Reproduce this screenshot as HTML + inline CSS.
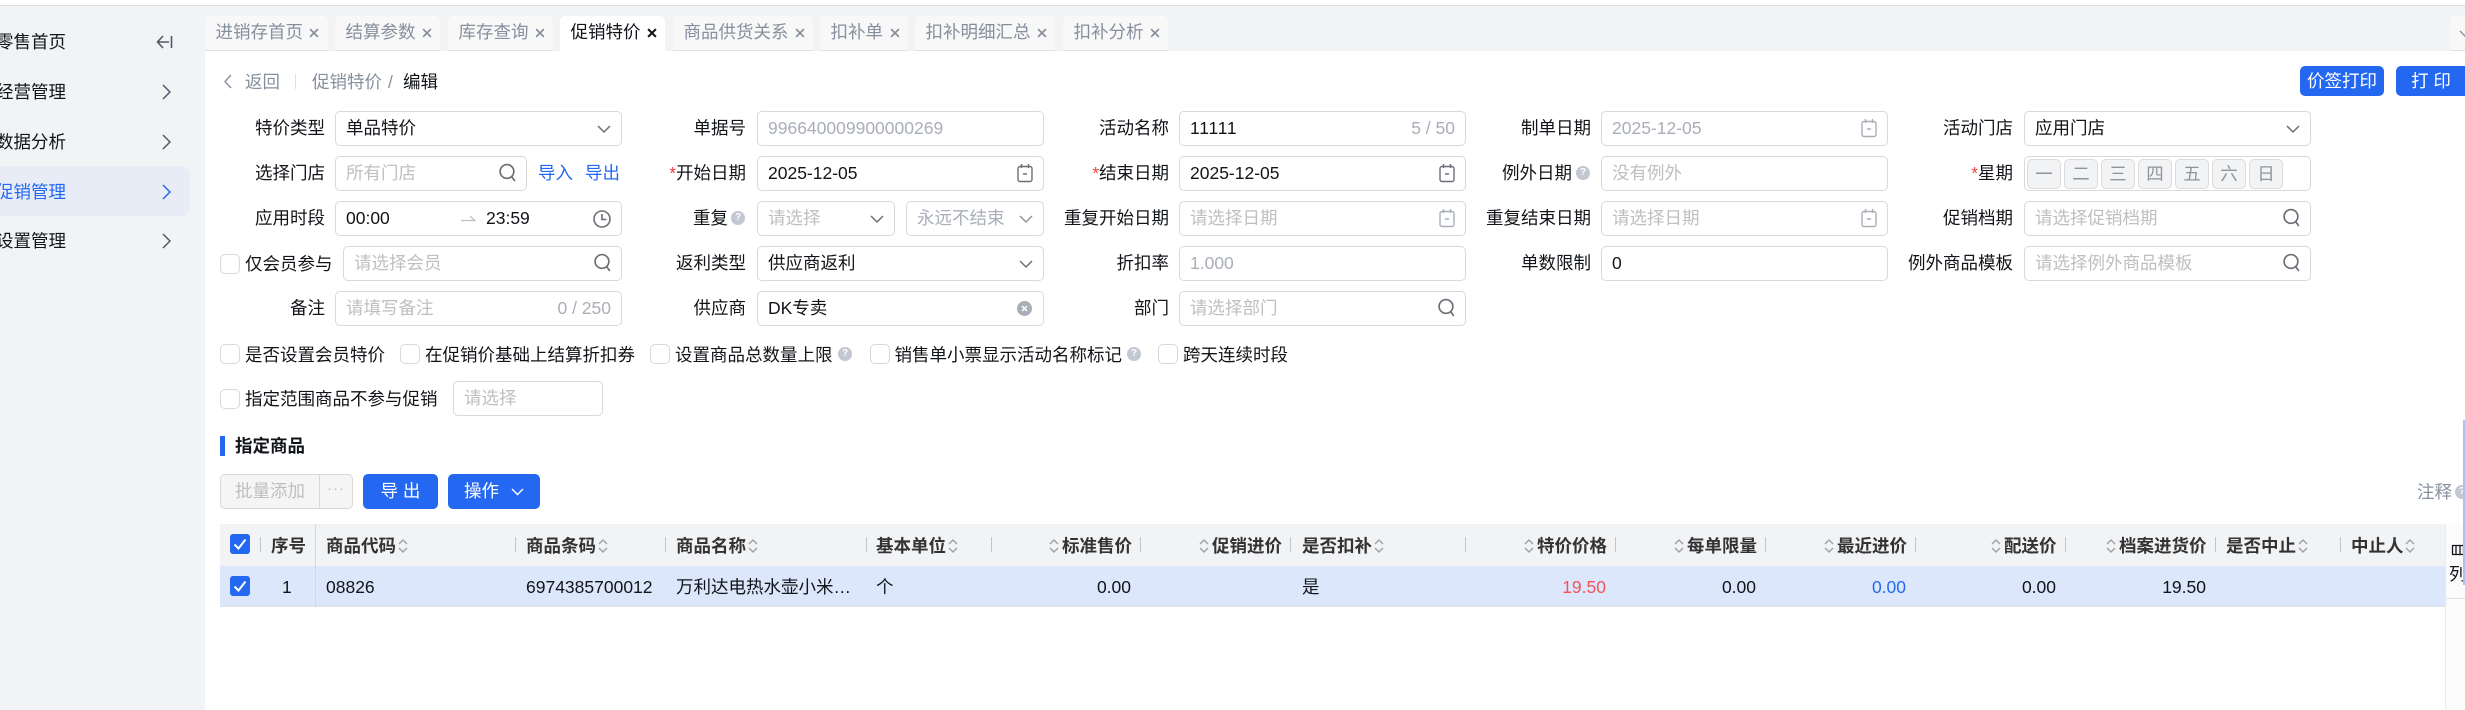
<!DOCTYPE html>
<html lang="zh-CN">
<head>
<meta charset="utf-8">
<title>促销特价</title>
<style>
html,body{margin:0;padding:0;width:2465px;height:710px;overflow:hidden;background:#fff}
body{position:relative;font-family:"Liberation Sans","Noto Sans CJK SC",sans-serif;font-size:17.5px;color:#111418}
div,span,svg{position:absolute;box-sizing:border-box;white-space:nowrap}
svg{fill:none;stroke:currentColor}
.tab{top:16px;height:35px;background:#f8f8f9;border-bottom:1px solid #dfe1e5;border-radius:5px 5px 0 0;color:#86909c;line-height:33px}
.tab span{left:10.5px;top:0}
.tab svg{top:12px;width:10px;height:10px;stroke-width:1.5}
.tab.on{background:#fff;border-bottom:0;color:#111418}
.nav{left:-4px;line-height:24px}
.chev{left:162px;width:9px;height:16px;color:#4e5969;stroke-width:1.5}
.i{height:35px;border:1px solid #d9d9d9;border-radius:5px;background:#fff;line-height:33px;padding-left:10px}
.ph{color:#bfbfbf}
.dis{color:#a9aeb8}
.l{width:220px;text-align:right;height:35px;line-height:35px}
.req{color:#f53f3f}
.ic{color:#6b6f76;stroke-width:1.6}
.cal{width:16px;height:20px;color:#6b6f76;stroke-width:1.4}
.cal.g{color:#a9aeb8}
.s{width:17px;height:19px;right:10px;top:6px;color:#6b6f76;stroke-width:1.6}
.dn{width:14px;height:9px;right:10px;top:13px;color:#6b6f76;stroke-width:1.5}
.cnt{right:10px;top:0;color:#a9aeb8}
.q{width:14px;height:14px;border-radius:50%;background:#c2c7d2;color:#fff;font-size:10px;line-height:14px;text-align:center;font-weight:700}
.cb{width:20px;height:20px;border:1px solid #d9d9d9;border-radius:5px;background:#fff}
.t{height:24px;line-height:24px}
.w{top:159px;width:34px;height:30px;border:1px solid #dcdcdc;border-radius:5px;background:#f2f3f5;color:#8f949c;text-align:center;line-height:28px}
.btn{background:#2468f2;color:#fff;border-radius:5px;text-align:center;line-height:33px}
.th{top:534px;line-height:24px;font-weight:700;color:#333}
.sp{top:537px;width:1px;height:15px;background:#c0c4cc}
.so{top:538px;width:10px;height:16px;color:#a0a3a8;stroke-width:1.5}
.td{top:575px;line-height:24px}
.r{text-align:right;width:100px}
.chk{left:230px;width:20px;height:20px;background:#2468f2;border-radius:3px;color:#fff;stroke-width:2}
</style>
</head>
<body>

<!-- top strip -->
<div style="left:0;top:0;width:2465px;height:5px;background:#fff"></div>
<div style="left:0;top:5px;width:2465px;height:1px;background:#dcdee2"></div>
<div style="left:0;top:6px;width:2465px;height:45px;background:#f2f3f5"></div>
<div style="left:0;top:6px;width:205px;height:704px;background:#f2f3f5"></div>

<!-- sidebar -->
<div style="left:0;top:166px;width:190px;height:50px;background:#e8ecf6;border-radius:0 9px 9px 0"></div>
<div class="nav" style="top:30px">零售首页</div>
<div class="nav" style="top:80px">经营管理</div>
<div class="nav" style="top:130px">数据分析</div>
<div class="nav" style="top:180px;color:#2468f2">促销管理</div>
<div class="nav" style="top:229px">设置管理</div>
<svg style="left:156px;top:34px;width:17px;height:16px;color:#4e5969;stroke-width:1.6" viewBox="0 0 17 16"><path d="M7 2 1.500 8 7 14M1.500 8H13M15.500 2v12"/></svg>
<svg class="chev" style="top:84px" viewBox="0 0 9 16"><path d="M1 1l7 7-7 7"/></svg>
<svg class="chev" style="top:134px" viewBox="0 0 9 16"><path d="M1 1l7 7-7 7"/></svg>
<svg class="chev" style="top:184px;color:#2468f2" viewBox="0 0 9 16"><path d="M1 1l7 7-7 7"/></svg>
<svg class="chev" style="top:233px" viewBox="0 0 9 16"><path d="M1 1l7 7-7 7"/></svg>

<!-- tabs -->
<div class="tab" style="left:205px;width:123px"><span>进销存首页</span><svg style="left:104px" viewBox="0 0 9 9"><path d="M1 1l7 7M8 1 1 8"/></svg></div>
<div class="tab" style="left:335px;width:105px"><span>结算参数</span><svg style="left:87px" viewBox="0 0 9 9"><path d="M1 1l7 7M8 1 1 8"/></svg></div>
<div class="tab" style="left:448px;width:105px"><span>库存查询</span><svg style="left:87px" viewBox="0 0 9 9"><path d="M1 1l7 7M8 1 1 8"/></svg></div>
<div class="tab on" style="left:560px;width:105px"><span>促销特价</span><svg style="left:87px;stroke-width:1.8" viewBox="0 0 9 9"><path d="M1 1l7 7M8 1 1 8"/></svg></div>
<div class="tab" style="left:673px;width:140px"><span>商品供货关系</span><svg style="left:122px" viewBox="0 0 9 9"><path d="M1 1l7 7M8 1 1 8"/></svg></div>
<div class="tab" style="left:820px;width:88px"><span>扣补单</span><svg style="left:70px" viewBox="0 0 9 9"><path d="M1 1l7 7M8 1 1 8"/></svg></div>
<div class="tab" style="left:915px;width:140px"><span>扣补明细汇总</span><svg style="left:122px" viewBox="0 0 9 9"><path d="M1 1l7 7M8 1 1 8"/></svg></div>
<div class="tab" style="left:1063px;width:105px"><span>扣补分析</span><svg style="left:87px" viewBox="0 0 9 9"><path d="M1 1l7 7M8 1 1 8"/></svg></div>
<div class="tab" style="left:2450px;width:15px;border-radius:5px 0 0 0"><svg style="left:9px;top:14px;width:12px;height:8px;stroke-width:1.4" viewBox="0 0 12 8"><path d="M1 1l5 5 5-5"/></svg></div>

<!-- breadcrumb -->
<svg style="left:224px;top:74px;width:8px;height:15px;color:#86909c;stroke-width:1.4" viewBox="0 0 8 15"><path d="M7 1 1 7.500 7 14"/></svg>
<div class="t" style="left:245px;top:70px;color:#86909c">返回</div>
<div style="left:295px;top:74px;width:1px;height:15px;background:#dfe1e5"></div>
<div class="t" style="left:312px;top:70px;color:#86909c">促销特价</div>
<div class="t" style="left:388px;top:70px;color:#86909c">/</div>
<div class="t" style="left:403px;top:70px">编辑</div>
<div class="btn" style="left:2300px;top:66px;width:84px;height:30px;line-height:30px">价签打印</div>
<div class="btn" style="left:2396px;top:66px;width:78px;height:30px;line-height:30px;border-radius:5px 0 0 5px;padding-right:8px">打 印</div>

<!-- row 1 -->
<div class="l" style="left:105px;top:111px">特价类型</div>
<div class="i" style="left:335px;top:111px;width:287px">单品特价<svg class="dn" viewBox="0 0 14 9"><path d="M1 1l6 6 6-6"/></svg></div>
<div class="l" style="left:526px;top:111px">单据号</div>
<div class="i dis" style="left:757px;top:111px;width:287px">996640009900000269</div>
<div class="l" style="left:949px;top:111px">活动名称</div>
<div class="i" style="left:1179px;top:111px;width:287px;letter-spacing:.8px">11111<span class="cnt" style="letter-spacing:0">5 / 50</span></div>
<div class="l" style="left:1371px;top:111px">制单日期</div>
<div class="i dis" style="left:1601px;top:111px;width:287px">2025-12-05<svg class="cal g" style="right:10px;top:6px" viewBox="0 0 16 20"><rect x="1" y="3.500" width="14" height="15" rx="2"/><path d="M4.500 1v4M11.500 1v4M6 11h4"/></svg></div>
<div class="l" style="left:1793px;top:111px">活动门店</div>
<div class="i" style="left:2024px;top:111px;width:287px">应用门店<svg class="dn" viewBox="0 0 14 9"><path d="M1 1l6 6 6-6"/></svg></div>

<!-- row 2 -->
<div class="l" style="left:105px;top:156px">选择门店</div>
<div class="i ph" style="left:335px;top:156px;width:192px">所有门店<svg class="s" viewBox="0 0 16 18"><circle cx="7.500" cy="8" r="6.500"/><path d="M12 13l3 4"/></svg></div>
<div class="t" style="left:538px;top:161px;color:#2468f2">导入</div>
<div class="t" style="left:585px;top:161px;color:#2468f2">导出</div>
<div class="l" style="left:526px;top:156px"><span class="req" style="position:static">*</span>开始日期</div>
<div class="i" style="left:757px;top:156px;width:287px">2025-12-05<svg class="cal" style="right:10px;top:6px" viewBox="0 0 16 20"><rect x="1" y="3.500" width="14" height="15" rx="2"/><path d="M4.500 1v4M11.500 1v4M6 11h4"/></svg></div>
<div class="l" style="left:949px;top:156px"><span class="req" style="position:static">*</span>结束日期</div>
<div class="i" style="left:1179px;top:156px;width:287px">2025-12-05<svg class="cal" style="right:10px;top:6px" viewBox="0 0 16 20"><rect x="1" y="3.500" width="14" height="15" rx="2"/><path d="M4.500 1v4M11.500 1v4M6 11h4"/></svg></div>
<div class="l" style="left:1352px;top:156px">例外日期</div>
<div class="q" style="left:1576px;top:166px">?</div>
<div class="i ph" style="left:1601px;top:156px;width:287px">没有例外</div>
<div class="l" style="left:1793px;top:156px"><span class="req" style="position:static">*</span>星期</div>
<div class="i" style="left:2024px;top:156px;width:287px"></div>
<div class="w" style="left:2027px">一</div>
<div class="w" style="left:2064px">二</div>
<div class="w" style="left:2101px">三</div>
<div class="w" style="left:2138px">四</div>
<div class="w" style="left:2175px">五</div>
<div class="w" style="left:2212px">六</div>
<div class="w" style="left:2249px">日</div>

<!-- row 3 -->
<div class="l" style="left:105px;top:201px">应用时段</div>
<div class="i" style="left:335px;top:201px;width:287px">00:00<span style="left:150px;top:0">23:59</span><svg style="left:124px;top:12px;width:16px;height:8px;color:#bfbfbf;stroke-width:1.2" viewBox="0 0 16 8"><path d="M1 6.500h14L10 2"/></svg><svg class="ic" style="right:10px;top:8px;width:18px;height:18px" viewBox="0 0 18 18"><circle cx="9" cy="9" r="8"/><path d="M9 4v5.500h4.500"/></svg></div>
<div class="l" style="left:508px;top:201px">重复</div>
<div class="q" style="left:731px;top:211px">?</div>
<div class="i ph" style="left:757px;top:201px;width:138px">请选择<svg class="dn" viewBox="0 0 14 9"><path d="M1 1l6 6 6-6"/></svg></div>
<div class="i dis" style="left:906px;top:201px;width:138px">永远不结束<svg class="dn" style="color:#8f949c" viewBox="0 0 14 9"><path d="M1 1l6 6 6-6"/></svg></div>
<div class="l" style="left:949px;top:201px">重复开始日期</div>
<div class="i ph" style="left:1179px;top:201px;width:287px">请选择日期<svg class="cal g" style="right:10px;top:6px" viewBox="0 0 16 20"><rect x="1" y="3.500" width="14" height="15" rx="2"/><path d="M4.500 1v4M11.500 1v4M6 11h4"/></svg></div>
<div class="l" style="left:1371px;top:201px">重复结束日期</div>
<div class="i ph" style="left:1601px;top:201px;width:287px">请选择日期<svg class="cal g" style="right:10px;top:6px" viewBox="0 0 16 20"><rect x="1" y="3.500" width="14" height="15" rx="2"/><path d="M4.500 1v4M11.500 1v4M6 11h4"/></svg></div>
<div class="l" style="left:1793px;top:201px">促销档期</div>
<div class="i ph" style="left:2024px;top:201px;width:287px">请选择促销档期<svg class="s" viewBox="0 0 16 18"><circle cx="7.500" cy="8" r="6.500"/><path d="M12 13l3 4"/></svg></div>

<!-- row 4 -->
<div class="cb" style="left:220px;top:254px"></div>
<div class="t" style="left:245px;top:252px">仅会员参与</div>
<div class="i ph" style="left:343px;top:246px;width:279px">请选择会员<svg class="s" viewBox="0 0 16 18"><circle cx="7.500" cy="8" r="6.500"/><path d="M12 13l3 4"/></svg></div>
<div class="l" style="left:526px;top:246px">返利类型</div>
<div class="i" style="left:757px;top:246px;width:287px">供应商返利<svg class="dn" viewBox="0 0 14 9"><path d="M1 1l6 6 6-6"/></svg></div>
<div class="l" style="left:949px;top:246px">折扣率</div>
<div class="i dis" style="left:1179px;top:246px;width:287px">1.000</div>
<div class="l" style="left:1371px;top:246px">单数限制</div>
<div class="i" style="left:1601px;top:246px;width:287px">0</div>
<div class="l" style="left:1793px;top:246px">例外商品模板</div>
<div class="i ph" style="left:2024px;top:246px;width:287px">请选择例外商品模板<svg class="s" viewBox="0 0 16 18"><circle cx="7.500" cy="8" r="6.500"/><path d="M12 13l3 4"/></svg></div>

<!-- row 5 -->
<div class="l" style="left:105px;top:291px">备注</div>
<div class="i ph" style="left:335px;top:291px;width:287px">请填写备注<span class="cnt">0 / 250</span></div>
<div class="l" style="left:526px;top:291px">供应商</div>
<div class="i" style="left:757px;top:291px;width:287px">DK专卖<svg style="right:11px;top:9px;width:15px;height:15px" viewBox="0 0 15 15"><circle cx="7.500" cy="7.500" r="7.500" fill="#a9aeb8" stroke="none"/><path d="M5 5l5 5M10 5l-5 5" stroke="#fff" stroke-width="1.500"/></svg></div>
<div class="l" style="left:949px;top:291px">部门</div>
<div class="i ph" style="left:1179px;top:291px;width:287px">请选择部门<svg class="s" viewBox="0 0 16 18"><circle cx="7.500" cy="8" r="6.500"/><path d="M12 13l3 4"/></svg></div>

<!-- checkbox row -->
<div class="cb" style="left:220px;top:344px"></div>
<div class="t" style="left:245px;top:343px">是否设置会员特价</div>
<div class="cb" style="left:400px;top:344px"></div>
<div class="t" style="left:425px;top:343px">在促销价基础上结算折扣券</div>
<div class="cb" style="left:650px;top:344px"></div>
<div class="t" style="left:675px;top:343px">设置商品总数量上限</div>
<div class="q" style="left:838px;top:347px">?</div>
<div class="cb" style="left:869.500px;top:344px"></div>
<div class="t" style="left:894.500px;top:343px">销售单小票显示活动名称标记</div>
<div class="q" style="left:1127px;top:347px">?</div>
<div class="cb" style="left:1158px;top:344px"></div>
<div class="t" style="left:1183px;top:343px">跨天连续时段</div>

<div class="cb" style="left:220px;top:389px"></div>
<div class="t" style="left:245px;top:387px">指定范围商品不参与促销</div>
<div class="i ph" style="left:453px;top:381px;width:150px">请选择</div>

<!-- section -->
<div style="left:220px;top:436px;width:5px;height:20px;background:#2468f2"></div>
<div class="t" style="left:235px;top:434px;font-weight:700">指定商品</div>

<!-- toolbar -->
<div style="left:220px;top:474px;width:133px;height:35px;background:#f5f5f5;border:1px solid #d9d9d9;border-radius:5px;color:#bfbfbf;line-height:33px;padding-left:14px">批量添加<span style="left:98px;top:0;width:1px;height:33px;background:#d9d9d9"></span><span style="left:106px;top:-3px;letter-spacing:1px;font-size:15px">···</span></div>
<div class="btn" style="left:363px;top:474px;width:75px;height:35px;line-height:35px">导 出</div>
<div class="btn" style="left:448px;top:474px;width:92px;height:35px;line-height:35px;text-align:left;padding-left:16px">操作<svg style="left:63px;top:14px;width:13px;height:8px;stroke-width:1.400" viewBox="0 0 13 8"><path d="M1 1l5.500 5.500L12 1"/></svg></div>
<div class="t" style="left:2417px;top:480px;color:#86909c">注释</div>
<div class="q" style="left:2455px;top:485px">?</div>

<!-- table -->
<div style="left:220px;top:524px;width:2225px;height:42px;background:#f2f3f5"></div>
<div style="left:220px;top:566px;width:2225px;height:41px;background:#dce7fb;border-bottom:1px solid #dfe3ea"></div>
<div style="left:315px;top:524px;width:1px;height:83px;background:#d4d7dd"></div>

<svg class="chk" style="top:534px" viewBox="0 0 20 20"><path d="M4.500 10.500l4 4 7-9"/></svg>
<svg class="chk" style="top:576px" viewBox="0 0 20 20"><path d="M4.500 10.500l4 4 7-9"/></svg>

<div class="sp" style="left:260px"></div>
<div class="th" style="left:271px">序号</div>
<div class="th" style="left:326px">商品代码</div>
<svg class="so" style="left:398px" viewBox="0 0 10 16"><path d="M1 6l4-4 4 4M1 10l4 4 4-4"/></svg>
<div class="sp" style="left:515px"></div>
<div class="th" style="left:526px">商品条码</div>
<svg class="so" style="left:598px" viewBox="0 0 10 16"><path d="M1 6l4-4 4 4M1 10l4 4 4-4"/></svg>
<div class="sp" style="left:665px"></div>
<div class="th" style="left:676px">商品名称</div>
<svg class="so" style="left:748px" viewBox="0 0 10 16"><path d="M1 6l4-4 4 4M1 10l4 4 4-4"/></svg>
<div class="sp" style="left:866px"></div>
<div class="th" style="left:876px">基本单位</div>
<svg class="so" style="left:948px" viewBox="0 0 10 16"><path d="M1 6l4-4 4 4M1 10l4 4 4-4"/></svg>
<div class="sp" style="left:991px"></div>
<svg class="so" style="left:1049px" viewBox="0 0 10 16"><path d="M1 6l4-4 4 4M1 10l4 4 4-4"/></svg>
<div class="th" style="left:1062px">标准售价</div>
<div class="sp" style="left:1140px"></div>
<svg class="so" style="left:1199px" viewBox="0 0 10 16"><path d="M1 6l4-4 4 4M1 10l4 4 4-4"/></svg>
<div class="th" style="left:1212px">促销进价</div>
<div class="sp" style="left:1290px"></div>
<div class="th" style="left:1302px">是否扣补</div>
<svg class="so" style="left:1374px" viewBox="0 0 10 16"><path d="M1 6l4-4 4 4M1 10l4 4 4-4"/></svg>
<div class="sp" style="left:1465px"></div>
<svg class="so" style="left:1524px" viewBox="0 0 10 16"><path d="M1 6l4-4 4 4M1 10l4 4 4-4"/></svg>
<div class="th" style="left:1537px">特价价格</div>
<div class="sp" style="left:1615px"></div>
<svg class="so" style="left:1674px" viewBox="0 0 10 16"><path d="M1 6l4-4 4 4M1 10l4 4 4-4"/></svg>
<div class="th" style="left:1687px">每单限量</div>
<div class="sp" style="left:1765px"></div>
<svg class="so" style="left:1824px" viewBox="0 0 10 16"><path d="M1 6l4-4 4 4M1 10l4 4 4-4"/></svg>
<div class="th" style="left:1837px">最近进价</div>
<div class="sp" style="left:1915px"></div>
<svg class="so" style="left:1991px" viewBox="0 0 10 16"><path d="M1 6l4-4 4 4M1 10l4 4 4-4"/></svg>
<div class="th" style="left:2004px">配送价</div>
<div class="sp" style="left:2065px"></div>
<svg class="so" style="left:2106px" viewBox="0 0 10 16"><path d="M1 6l4-4 4 4M1 10l4 4 4-4"/></svg>
<div class="th" style="left:2119px">档案进货价</div>
<div class="sp" style="left:2215px"></div>
<div class="th" style="left:2226px">是否中止</div>
<svg class="so" style="left:2298px" viewBox="0 0 10 16"><path d="M1 6l4-4 4 4M1 10l4 4 4-4"/></svg>
<div class="sp" style="left:2340px"></div>
<div class="th" style="left:2351px">中止人</div>
<svg class="so" style="left:2405px" viewBox="0 0 10 16"><path d="M1 6l4-4 4 4M1 10l4 4 4-4"/></svg>

<div class="td" style="left:282px">1</div>
<div class="td" style="left:326px">08826</div>
<div class="td" style="left:526px">6974385700012</div>
<div class="td" style="left:676px">万利达电热水壶小米…</div>
<div class="td" style="left:876px">个</div>
<div class="td r" style="left:1031px">0.00</div>
<div class="td" style="left:1302px">是</div>
<div class="td r" style="left:1506px;color:#f7515a">19.50</div>
<div class="td r" style="left:1656px">0.00</div>
<div class="td r" style="left:1806px;color:#2468f2">0.00</div>
<div class="td r" style="left:1956px">0.00</div>
<div class="td r" style="left:2106px">19.50</div>

<!-- right column panel -->
<div style="left:2445px;top:524px;width:20px;height:186px;background:#fbfbfc;border-left:1px solid #e8eaee"></div>
<div style="left:2446px;top:598px;width:19px;height:1px;background:#e0e2e6"></div>
<svg style="left:2451px;top:544px;width:14px;height:12px;color:#111418;stroke-width:1.300" viewBox="0 0 14 12"><path d="M1 1.500h12M1 10.500h12M1.500 1.500v9M5 1.500v9M9 1.500v9M12.500 1.500v9"/></svg>
<div style="left:2449px;top:562px;width:16px;height:24px;line-height:24px;overflow:hidden">列</div>
<div style="left:2463px;top:420px;width:2px;height:165px;background:#a9c1f8"></div>

</body>
</html>
